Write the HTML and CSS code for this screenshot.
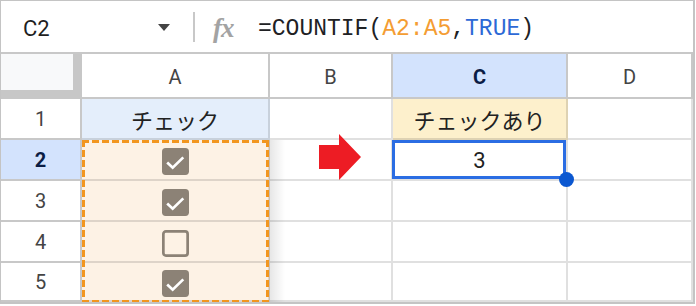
FILE: index.html
```html
<!DOCTYPE html>
<html lang="ja">

<head>
    <meta charset="UTF-8">
    <meta name="viewport" content="width=device-width, initial-scale=1.0">
    <title>COUNTIF チェック</title>
    <link rel="stylesheet" href="styles.css">
</head>

<body>
    <div class="frame">
        <div class="formula-bar">
            <div class="name-box">C2</div>
            <span class="caret"></span>
            <span class="divider"></span>
            <span class="fx">fx</span>
            <div class="formula">=COUNTIF(<span class="ref">A2:A5</span>,<span class="bool">TRUE</span>)</div>
        </div>

        <div class="sheet">
            <!-- header row -->
            <div class="corner"></div>
            <div class="col-head">A</div>
            <div class="col-head">B</div>
            <div class="col-head active">C</div>
            <div class="col-head">D</div>

            <!-- row 1 -->
            <div class="row-head">1</div>
            <div class="cell title-blue">チェック</div>
            <div class="cell"></div>
            <div class="cell title-yellow">チェックあり</div>
            <div class="cell"></div>

            <!-- row 2 -->
            <div class="row-head active">2</div>
            <div class="cell in-range">
                <svg class="box" viewBox="0 0 26 26"><rect width="26" height="26" rx="3.5" fill="#8c8276"/><path d="M5 14l5.3 5l10.2-10" fill="none" stroke="#fff" stroke-width="2.6"/></svg>
            </div>
            <div class="cell arrow-cell">
                <svg class="arrow" viewBox="0 0 42 46"><polygon points="0,11 20,11 20,0 42,23 20,46 20,35 0,35" fill="#ed1c24"/></svg>
            </div>
            <div class="cell selected">3
                <span class="selection"></span>
                <span class="fill-handle"></span>
            </div>
            <div class="cell"></div>

            <!-- row 3 -->
            <div class="row-head">3</div>
            <div class="cell in-range">
                <svg class="box" viewBox="0 0 26 26"><rect width="26" height="26" rx="3.5" fill="#8c8276"/><path d="M5 14l5.3 5l10.2-10" fill="none" stroke="#fff" stroke-width="2.6"/></svg>
            </div>
            <div class="cell"></div>
            <div class="cell"></div>
            <div class="cell"></div>

            <!-- row 4 -->
            <div class="row-head">4</div>
            <div class="cell in-range">
                <svg class="box" viewBox="0 0 26 26"><rect x="1.3" y="1.3" width="23.4" height="23.4" rx="2.5" fill="none" stroke="#8c8276" stroke-width="2.6"/></svg>
            </div>
            <div class="cell"></div>
            <div class="cell"></div>
            <div class="cell"></div>

            <!-- row 5 -->
            <div class="row-head">5</div>
            <div class="cell in-range">
                <svg class="box" viewBox="0 0 26 26"><rect width="26" height="26" rx="3.5" fill="#8c8276"/><path d="M5 14l5.3 5l10.2-10" fill="none" stroke="#fff" stroke-width="2.6"/></svg>
            </div>
            <div class="cell"></div>
            <div class="cell"></div>
            <div class="cell"></div>

            <div class="copy-range"></div>
        </div>
    </div>
</body>
</html>
```

FILE: styles.css
```css
body {
    margin: 0;
    width: 696px;
    height: 306px;
    overflow: hidden;
    background: #fff;
    font-family: Roboto, "Liberation Sans", "Noto Sans CJK JP", sans-serif;
    color: #222;
}

.frame {
    width: 695px;
    height: 304px;
    box-sizing: border-box;
    border-style: solid;
    border-color: #c4c4c4;
    border-width: 1px 2px 2px 1px;
    overflow: hidden;
}

/* formula bar */
.formula-bar {
    height: 53px;
    box-sizing: border-box;
    border-bottom: 2px solid #c8c8c8;
    display: flex;
    align-items: center;
    padding-top: 4px;
}

.name-box {
    width: 135px;
    padding-left: 22px;
    font-size: 22px;
    color: #1f1f1f;
}

.caret {
    width: 0;
    height: 0;
    border-left: 6px solid transparent;
    border-right: 6px solid transparent;
    border-top: 7px solid #444;
    margin-bottom: 3px;
}

.divider {
    width: 2px;
    height: 30px;
    margin: 0 18px 4px 23px;
    background: #c8c8c8;
}

.fx {
    width: 45px;
    font-family: "Liberation Serif", serif;
    font-style: italic;
    font-weight: bold;
    font-size: 27px;
    color: #a3a3a3;
    letter-spacing: -1px;
}

.formula {
    font-family: "Liberation Mono", monospace;
    font-size: 23px;
    color: #202124;
}

.formula .ref {
    color: #f49d33;
}

.formula .bool {
    color: #2d69d6;
}

/* grid */
.sheet {
    position: relative;
    display: grid;
    grid-template-columns: 81px 188px 123px 175px 125px;
    grid-template-rows: 45px 41px 41px 41px 41px 39px;
}

.sheet > div {
    box-sizing: border-box;
    display: flex;
    align-items: center;
    justify-content: center;
}

.corner {
    background: #f8f9fa;
    border-right: 9px solid #c7c7c7;
    border-bottom: 9px solid #c7c7c7;
}

.col-head {
    font-size: 20px;
    color: #444;
    border-right: 2px solid #c8c8c8;
    border-bottom: 2px solid #c8c8c8;
    padding-top: 2px;
}

.col-head:last-of-type {
    border-right: none;
}

.col-head.active,
.row-head.active {
    background: #d3e3fd;
    color: #0b1d45;
    font-weight: bold;
}

.row-head {
    font-size: 20px;
    color: #444;
    border-right: 2px solid #c8c8c8;
    border-bottom: 2px solid #c8c8c8;
}

.cell {
    border-right: 2px solid rgba(0, 0, 0, 0.12);
    border-bottom: 2px solid rgba(0, 0, 0, 0.12);
    font-size: 22px;
    position: relative;
}

.title-blue {
    background: #e4eefb;
    font-size: 22px;
    font-family: "Noto Sans CJK JP", sans-serif;
}

.title-yellow {
    background: #fdf0cc;
    font-size: 22px;
    font-family: "Noto Sans CJK JP", sans-serif;
}

.in-range {
    background: #fdf2e5;
    padding-top: 3px;
}

.box {
    width: 27px;
    height: 27px;
}

.arrow-cell.cell {
    justify-content: flex-start;
    padding-left: 49px;
}

.arrow {
    width: 42px;
    height: 46px;
    flex: none;
    margin-top: -5px;
}

.selected {
    padding-top: 1px;
}

.selection {
    position: absolute;
    top: 0;
    left: -1px;
    right: 0;
    bottom: 0;
    border: 3px solid #2b6de3;
    z-index: 2;
}

.fill-handle {
    position: absolute;
    right: -8px;
    bottom: -8px;
    width: 15px;
    height: 15px;
    border-radius: 50%;
    background: #0b57d0;
    z-index: 3;
}

/* dashed copy range A2:A5 */
.sheet > .copy-range {
    position: absolute;
    grid-column: 2 / 3;
    grid-row: 3 / 7;
    top: 0;
    left: 0;
    right: 1px;
    bottom: -1px;
    background:
        repeating-linear-gradient(90deg, #f2961f 0 7px, transparent 7px 10px) top / 100% 3px no-repeat,
        repeating-linear-gradient(90deg, #f2961f 0 7px, transparent 7px 10px) bottom / 100% 3px no-repeat,
        repeating-linear-gradient(180deg, #f2961f 0 7px, transparent 7px 10px) left / 3px 100% no-repeat,
        repeating-linear-gradient(180deg, #f2961f 0 7px, transparent 7px 10px) right / 3px 100% no-repeat;
}

.copy-range::after {
    content: "";
    position: absolute;
    top: 0;
    bottom: 0;
    left: 100%;
    width: 16px;
    background: linear-gradient(to right, rgba(0, 0, 0, 0.1), rgba(0, 0, 0, 0));
}
```
